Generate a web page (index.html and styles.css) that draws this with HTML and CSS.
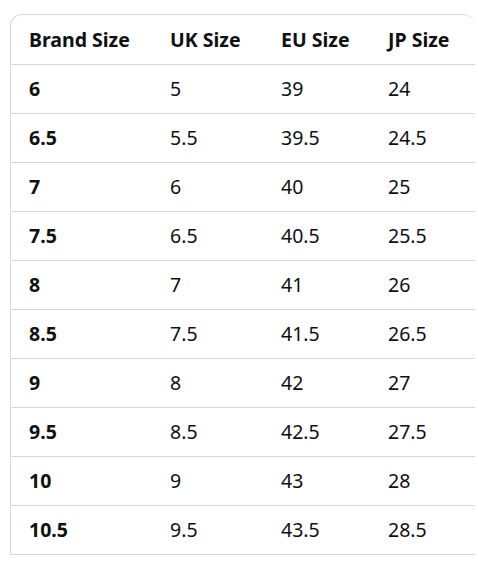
FILE: index.html
```html
<!DOCTYPE html>
<html lang="en">
<head>
    <meta charset="UTF-8">
    <meta name="viewport" content="width=device-width, initial-scale=1.0">
    <title>Size Chart</title>
    <link rel="stylesheet" href="styles.css">
</head>
<body>
    <div class="chart">
        <table class="size-table">
            <thead>
                <tr>
                    <th class="col-brand">Brand Size</th>
                    <th class="col-uk">UK Size</th>
                    <th class="col-eu">EU Size</th>
                    <th class="col-jp">JP Size</th>
                </tr>
            </thead>
            <tbody>
                <tr><td class="brand">6</td><td>5</td><td>39</td><td>24</td></tr>
                <tr><td class="brand">6.5</td><td>5.5</td><td>39.5</td><td>24.5</td></tr>
                <tr><td class="brand">7</td><td>6</td><td>40</td><td>25</td></tr>
                <tr><td class="brand">7.5</td><td>6.5</td><td>40.5</td><td>25.5</td></tr>
                <tr><td class="brand">8</td><td>7</td><td>41</td><td>26</td></tr>
                <tr><td class="brand">8.5</td><td>7.5</td><td>41.5</td><td>26.5</td></tr>
                <tr><td class="brand">9</td><td>8</td><td>42</td><td>27</td></tr>
                <tr><td class="brand">9.5</td><td>8.5</td><td>42.5</td><td>27.5</td></tr>
                <tr><td class="brand">10</td><td>9</td><td>43</td><td>28</td></tr>
                <tr><td class="brand">10.5</td><td>9.5</td><td>43.5</td><td>28.5</td></tr>
            </tbody>
        </table>
    </div>
</body>
</html>
```

FILE: styles.css
```css
* {
    margin: 0;
    padding: 0;
    box-sizing: border-box;
}

body {
    font-family: 'Noto Sans', 'Open Sans', sans-serif;
    background: #fff;
    color: #0f1111;
    padding: 14px 0 0 10px;
}

.chart {
    width: 465px;
    border-top: 1px solid #d5d9d9;
    border-left: 1px solid #d5d9d9;
    border-top-left-radius: 12px;
    border-top-right-radius: 12px;
    overflow: hidden;
}

.size-table {
    width: 100%;
    border-collapse: collapse;
    table-layout: fixed;
    font-size: 19.5px;
}

.size-table th,
.size-table td {
    height: 49px;
    padding: 0 0 0 18px;
    text-align: left;
    border-bottom: 1px solid #d5d9d9;
    vertical-align: middle;
}

.size-table th,
.size-table td.brand {
    font-weight: 700;
}

.col-brand { width: 141px; }
.col-uk { width: 111px; }
.col-eu { width: 107px; }
.col-jp { width: 105px; }
```
